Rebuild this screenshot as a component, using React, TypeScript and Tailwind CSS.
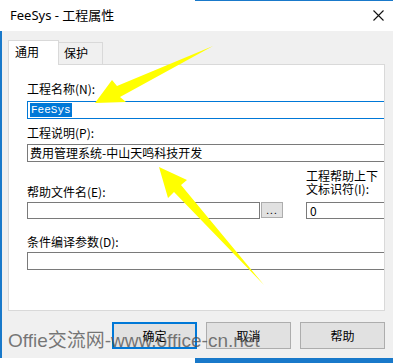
const cjk = { fontFamily: '"Noto Sans CJK SC", "Noto Sans", sans-serif' };

function Field({ children, focused }: { children?: React.ReactNode; focused?: boolean }) {
    return (
        <div
            className={
                "h-[18px] border border-r-0 bg-white flex items-center pl-[2px] " +
                (focused ? "border-[#0078d7]" : "border-[#7a7a7a]")
            }
        >
            {children}
        </div>
    );
}

function Button({ label, primary }: { label: string; primary?: boolean }) {
    return (
        <div
            className={
                "w-[85px] h-[27px] flex items-center justify-center bg-[#e1e1e1] text-[12px] text-black " +
                (primary ? "border-2 border-[#0078d7]" : "border border-[#adadad]")
            }
            style={cjk}
        >
            {label}
        </div>
    );
}

export default function App() {
    return (
        <div className="relative w-[393px] h-[363px] overflow-hidden bg-white flex flex-col" style={cjk}>
            {/* title bar */}
            <div className="h-[31px] shrink-0 flex items-center justify-between pl-[10px] pr-[9px] bg-white">
                <span className="text-[13px] text-black" style={{ fontFamily: '"Noto Sans", "Noto Sans CJK SC", sans-serif' }}>
                    FeeSys - 工程属性
                </span>
                <svg width="11" height="11" viewBox="0 0 11 11">
                    <path d="M0.5 0.5 L10.5 10.5 M10.5 0.5 L0.5 10.5" stroke="#111" strokeWidth="1.1" />
                </svg>
            </div>

            {/* dialog body */}
            <div className="h-[327px] shrink-0 bg-[#f0f0f0] border-l-2 border-[#1979ca] pl-[6px] pt-[9px] flex flex-col">
                <div className="flex items-end h-[24px] text-[12px] text-black">
                    <div className="relative z-10 w-[51px] h-[25px] -mb-px bg-white border border-b-0 border-[#d9d9d9] pl-[6px] pt-[2px]">
                        通用
                    </div>
                    <div className="w-[44px] h-[22px] border-t border-r border-[#d9d9d9] bg-[#f0f0f0] pl-[5px] pt-[1px]">
                        保护
                    </div>
                </div>

                <div className="w-[377px] h-[247px] bg-white border border-[#d9d9d9] pl-[18px] pt-[16px] text-[12px] text-black">
                    <div className="leading-[16px]">工程名称(N):</div>
                    <div className="mt-[4px]">
                        <Field focused>
                            <span
                                className="bg-[#0078d7] text-white text-[11px] leading-[14px] px-[1px]"
                                style={{ fontFamily: '"Liberation Mono", monospace' }}
                            >
                                FeeSys
                            </span>
                        </Field>
                    </div>

                    <div className="leading-[16px] mt-[6px]">工程说明(P):</div>
                    <div className="mt-[3px]">
                        <Field>
                            <span className="leading-[14px]">费用管理系统-中山天鸣科技开发</span>
                        </Field>
                    </div>

                    <div className="flex items-end mt-[7px]">
                        <div className="w-[233px] flex flex-col">
                            <div className="leading-[16px]">帮助文件名(E):</div>
                            <div className="mt-[2px] h-[17px] border border-[#7a7a7a] bg-white" />
                        </div>
                        <div className="ml-[1px] mb-[1px] w-[22px] h-[16px] bg-[#e1e1e1] border border-[#adadad] flex items-center justify-center text-[10px] leading-none tracking-[1px]">
                            ...
                        </div>
                        <div className="ml-[23px] flex-1 flex flex-col">
                            <div className="leading-[13px]">
                                工程帮助上下
                                <br />
                                文标识符(I):
                            </div>
                            <div className="mt-[7px] h-[17px] border border-r-0 border-[#7a7a7a] bg-white pl-[3px] leading-[15px]">
                                0
                            </div>
                        </div>
                    </div>

                    <div className="leading-[16px] mt-[15px]">条件编译参数(D):</div>
                    <div className="mt-[2px]">
                        <Field />
                    </div>
                </div>

                <div className="flex gap-[9px] pl-[104px] mt-[11px]">
                    <Button label="确定" primary />
                    <Button label="取消" />
                    <Button label="帮助" />
                </div>
            </div>

            {/* strip below dialog */}
            <div className="flex-1 flex">
                <div className="w-[195px] bg-white" />
                <div className="flex-1 bg-[#1979ca]" />
            </div>
            <div className="absolute top-0 left-[195px] right-0 h-px bg-[#1979ca]" />

            {/* watermark */}
            <div
                className="absolute left-[8px] top-[329px] text-[19px] leading-[24px] text-[#4d4d4d]/75 whitespace-nowrap pointer-events-none"
                style={{ fontFamily: '"Liberation Sans", "Noto Sans CJK SC", sans-serif' }}
            >
                Offie交流网-www.office-cn.net
            </div>

            {/* annotation arrows */}
            <svg className="absolute inset-0 pointer-events-none" width="393" height="363" viewBox="0 0 393 363">
                <polygon points="95,103 112,80 117,86 213,46 120,97 126,102" fill="#ffff00" />
                <polygon points="159,167 187,180 181,185 264,285 174,192 168,198" fill="#ffff00" />
            </svg>
        </div>
    );
}
